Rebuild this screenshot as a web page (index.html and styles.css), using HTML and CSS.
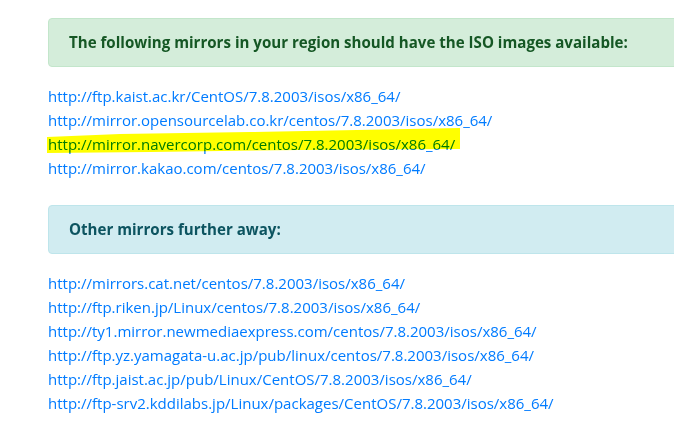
FILE: index.html
```html
<!DOCTYPE html>
<html>
<head>
<meta charset="utf-8">
<link rel="stylesheet" href="styles.css">
</head>
<body>
<div class="page">
  <div class="alert alert-success"><h5 class="alert-title">The following mirrors in your region should have the ISO images available:</h5></div>
  <div class="links">
    <a href="#">http://ftp.kaist.ac.kr/CentOS/7.8.2003/isos/x86_64/</a>
    <a href="#">http://mirror.opensourcelab.co.kr/centos/7.8.2003/isos/x86_64/</a>
    <a href="#" class="marked">http://mirror.navercorp.com/centos/7.8.2003/isos/x86_64/</a>
    <a href="#">http://mirror.kakao.com/centos/7.8.2003/isos/x86_64/</a>
  </div>
  <div class="alert alert-info"><h5 class="alert-title">Other mirrors further away:</h5></div>
  <div class="links">
    <a href="#">http://mirrors.cat.net/centos/7.8.2003/isos/x86_64/</a>
    <a href="#">http://ftp.riken.jp/Linux/centos/7.8.2003/isos/x86_64/</a>
    <a href="#">http://ty1.mirror.newmediaexpress.com/centos/7.8.2003/isos/x86_64/</a>
    <a href="#">http://ftp.yz.yamagata-u.ac.jp/pub/linux/centos/7.8.2003/isos/x86_64/</a>
    <a href="#">http://ftp.jaist.ac.jp/pub/Linux/CentOS/7.8.2003/isos/x86_64/</a>
    <a href="#">http://ftp-srv2.kddilabs.jp/Linux/packages/CentOS/7.8.2003/isos/x86_64/</a>
    <a href="#">http://ftp.tsukuba.wide.ad.jp/Linux/centos/7.8.2003/isos/x86_64/</a>
  </div>
</div>
<svg class="highlight" width="674" height="421" viewBox="0 0 674 421"><polygon points="47,137 120,134 250,132 460,128 460,149 300,150 150,152 47,153" fill="#ffff00"/></svg>
</body>
</html>
```
FILE: styles.css
```css
html, body {
  margin: 0;
  padding: 0;
  background: #fff;
  overflow: hidden;
}
body {
  width: 674px;
  height: 421px;
  position: relative;
  font-family: "Open Sans", "Noto Sans", sans-serif;
  font-size: 15px;
}
.page {
  padding: 18px 0 0 48px;
  width: 720px;
}
.alert {
  border: 1px solid transparent;
  border-radius: 4px;
  padding: 12px 20px;
}
.alert-success {
  background: #d4edda;
  border-color: #c3e6cb;
  color: #155724;
}
.alert-info {
  background: #d1ecf1;
  border-color: #bee5eb;
  color: #0c5460;
  margin-top: 25px;
}
.alert-title {
  margin: 0;
  font-size: 15.1px;
  font-weight: 700;
  line-height: 23px;
}
.links {
  display: flex;
  flex-direction: column;
  margin-top: 18px;
}
.links a {
  color: #007bff;
  text-decoration: none;
  line-height: 23.85px;
  white-space: nowrap;
}
.highlight {
  position: absolute;
  left: 0;
  top: 0;
  mix-blend-mode: multiply;
  pointer-events: none;
}
```
